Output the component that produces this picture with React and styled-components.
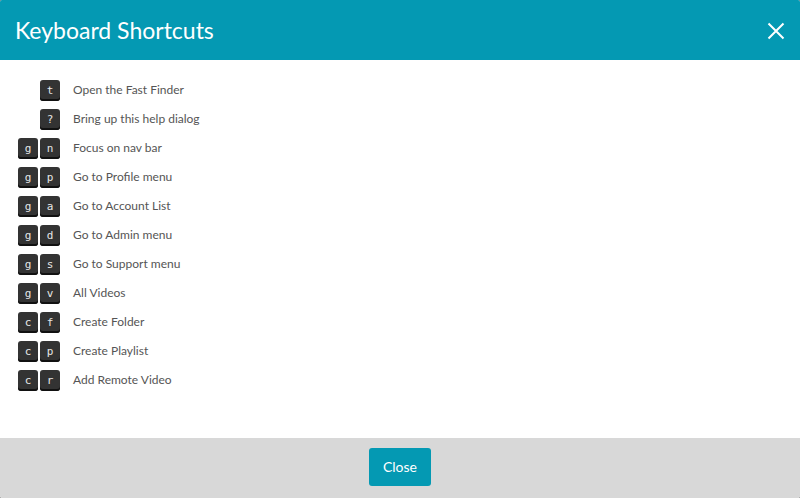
import React from "react";
import styled, { createGlobalStyle } from "styled-components";

const GlobalStyle = createGlobalStyle`
  *, *::before, *::after { box-sizing: border-box; }
  body {
    margin: 0;
    background: #666;
    font-family: Lato, sans-serif;
    color: #555;
    -webkit-font-smoothing: antialiased;
  }
`;

const Dialog = styled.section`
  display: flex;
  flex-direction: column;
  min-height: 100vh;
  overflow: hidden;
  border-radius: 2px;
  background: #fff;
`;

const Header = styled.header`
  display: flex;
  align-items: center;
  justify-content: space-between;
  height: 60px;
  padding: 0 15px;
  background: #0499b3;
  color: #fff;
`;

const Title = styled.h1`
  margin: 0;
  font-size: 23px;
  font-weight: 400;
  line-height: 32px;
`;

const IconButton = styled.button`
  display: flex;
  padding: 2px 0 0;
  border: 0;
  background: none;
  color: inherit;
  cursor: pointer;
`;

const Body = styled.main`
  flex: 1;
  padding: 15px 16px;
`;

const ShortcutTable = styled.table`
  border-collapse: collapse;
`;

const KeyCell = styled.th`
  height: 29px;
  padding: 2px 0 0;
  font-weight: 400;
`;

const Keys = styled.div`
  display: flex;
  justify-content: flex-end;
  gap: 2px;
  padding: 0 2px;
`;

const Key = styled.kbd`
  width: 20px;
  height: 21px;
  border-radius: 3px;
  background: #333;
  box-shadow: inset 0 -2px #111;
  color: #e6e6e6;
  font: 11px/22px "DejaVu Sans Mono", monospace;
  text-align: center;
`;

const Action = styled.td`
  padding: 0 0 0 11px;
  font-size: 12px;
  line-height: 18px;
`;

const Footer = styled.footer`
  display: flex;
  align-items: center;
  justify-content: center;
  height: 60px;
  padding-bottom: 2px;
  background: #d8d8d8;
`;

const Button = styled.button`
  height: 38px;
  padding: 0 14px;
  border: 0;
  border-radius: 3px;
  background: #0499b3;
  color: #fff;
  font: 14px/20px Lato, sans-serif;
  cursor: pointer;
`;

const shortcuts = [
  ["t", "Open the Fast Finder"],
  ["?", "Bring up this help dialog"],
  ["gn", "Focus on nav bar"],
  ["gp", "Go to Profile menu"],
  ["ga", "Go to Account List"],
  ["gd", "Go to Admin menu"],
  ["gs", "Go to Support menu"],
  ["gv", "All Videos"],
  ["cf", "Create Folder"],
  ["cp", "Create Playlist"],
  ["cr", "Add Remote Video"],
];

export default function App() {
  return (
    <>
      <GlobalStyle />
      <Dialog role="dialog" aria-labelledby="title">
        <Header>
          <Title id="title">Keyboard Shortcuts</Title>
          <IconButton type="button" aria-label="Close dialog">
            <svg width="18" height="18" viewBox="0 0 18 18" fill="none" stroke="currentColor" strokeWidth="2">
              <path d="M1.5 1.5 16.5 16.5M16.5 1.5 1.5 16.5" />
            </svg>
          </IconButton>
        </Header>
        <Body>
          <ShortcutTable>
            <tbody>
              {shortcuts.map(([keys, action]) => (
                <tr key={keys}>
                  <KeyCell scope="row">
                    <Keys>
                      {[...keys].map((k) => (
                        <Key key={k}>{k}</Key>
                      ))}
                    </Keys>
                  </KeyCell>
                  <Action>{action}</Action>
                </tr>
              ))}
            </tbody>
          </ShortcutTable>
        </Body>
        <Footer>
          <Button type="button">Close</Button>
        </Footer>
      </Dialog>
    </>
  );
}
